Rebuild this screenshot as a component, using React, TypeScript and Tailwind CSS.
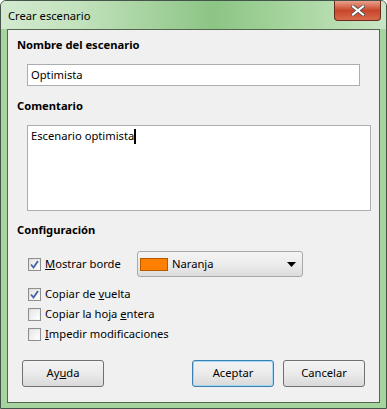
import React from 'react';

const font = { fontFamily: '"Noto Sans", "Open Sans", Arial, sans-serif' };

const Check: React.FC<{ checked?: boolean }> = ({ checked }) => (
  <div className="w-[13px] h-[13px] border border-[#8e8f8f] bg-gradient-to-br from-[#dcdcdc] to-[#fbfbfb] p-[1px] shrink-0">
    <div className="w-full h-full bg-gradient-to-br from-[#e6e6e6] to-[#ffffff] flex items-center justify-center">
      {checked && (
        <svg width="9" height="9" viewBox="0 0 9 9">
          <path d="M1 4.5 L3.5 7.5 L8 1" fill="none" stroke="#4561a8" strokeWidth="1.8" />
        </svg>
      )}
    </div>
  </div>
);

const CheckRow: React.FC<{ checked?: boolean; children: React.ReactNode }> = ({ checked, children }) => (
  <div className="flex items-center h-[20px] pl-[20px]">
    <Check checked={checked} />
    <span className="ml-[4px] text-[11.2px] text-black">{children}</span>
  </div>
);

const Button: React.FC<{ children: React.ReactNode; def?: boolean; className?: string }> = ({ children, def, className }) => (
  <div
    className={
      'h-[27px] rounded-[3px] border flex items-center justify-center text-[11.2px] text-black bg-gradient-to-b from-[#f3f3f3] via-[#ebebeb] to-[#d9d9d9] ' +
      (def ? 'border-[#3c7fb1] shadow-[inset_0_0_0_1px_#9fd9f5] ' : 'border-[#707070] ') +
      (className ?? '')
    }
  >
    {children}
  </div>
);

const App: React.FC = () => {
  return (
    <div className="w-[387px] h-[409px] bg-white" style={font}>
      <div className="w-[387px] h-[409px] rounded-t-[6px] border border-[#44544a] bg-[#a6d49e] flex flex-col">
        <div className="h-[28px] flex items-start bg-[linear-gradient(90deg,#d3ead0_0%,#c2e2bd_20%,#8cc584_55%,#a6d59e_75%,#c9e6c4_100%)] rounded-t-[5px]">
          <span className="ml-[7px] mt-[7px] text-[11.2px] text-black">Crear escenario</span>
          <div className="ml-auto mr-[5px] w-[47px] h-[20px] rounded-b-[4px] border border-t-0 border-[#6b2a1e] bg-gradient-to-b from-[#e8a08a] via-[#c7452a] to-[#d86a4a] flex items-center justify-center">
            <svg width="14" height="11" viewBox="0 0 14 11">
              <path d="M2 1.5 L12 9.5 M12 1.5 L2 9.5" stroke="#4a4a4a" strokeWidth="3.6" strokeLinecap="square" />
              <path d="M2 1.5 L12 9.5 M12 1.5 L2 9.5" stroke="#ffffff" strokeWidth="2.2" strokeLinecap="square" />
            </svg>
          </div>
        </div>
        <div className="mx-[6px] h-[374px] border border-[#55664f] bg-[#f0f0f0] flex flex-col">
          <div className="mt-[7px] ml-[9px] h-[16px] leading-[16px] text-[11.2px] font-bold text-black">Nombre del escenario</div>
          <div className="mt-[11px] ml-[19px] w-[333px] h-[22px] border border-[#abadb3] bg-white flex items-center pl-[3px] text-[11.2px] text-black">
            Optimista
          </div>
          <div className="mt-[12px] ml-[9px] h-[16px] leading-[16px] text-[11.2px] font-bold text-black">Comentario</div>
          <div className="mt-[11px] ml-[19px] w-[344px] h-[86px] border border-[#abadb3] bg-white pl-[3px] pt-[2px] text-[11.2px] leading-[16px] text-black flex items-start">
            <span>Escenario optimista</span>
            <span className="inline-block w-[2px] h-[15px] bg-black mt-[1px]" />
          </div>
          <div className="mt-[11px] ml-[9px] h-[16px] leading-[16px] text-[11.2px] font-bold text-black">Configuración</div>
          <div className="mt-[13px] h-[26px] flex items-center pl-[20px]">
            <Check checked />
            <span className="ml-[4px] text-[11.2px] text-black w-[92px]">
              <u>M</u>ostrar borde
            </span>
            <div className="w-[166px] h-[26px] rounded-[3px] border border-[#a8a8a8] bg-gradient-to-b from-[#f4f4f4] via-[#ececec] to-[#dcdcdc] flex items-center pl-[2px] pr-[6px]">
              <div className="w-[28px] h-[13px] bg-[#ff8000] border border-[#b35a00]" />
              <span className="ml-[4px] text-[11.2px] text-black">Naranja</span>
              <svg className="ml-auto" width="9" height="5" viewBox="0 0 9 5">
                <path d="M0 0 H9 L4.5 5 Z" fill="#000" />
              </svg>
            </div>
          </div>
          <div className="mt-[7px]">
            <CheckRow checked>
              Copiar de <u>v</u>uelta
            </CheckRow>
            <CheckRow>
              Copiar la hoja <u>e</u>ntera
            </CheckRow>
            <CheckRow>
              <u>I</u>mpedir modificaciones
            </CheckRow>
          </div>
          <div className="mt-[16px] flex pl-[14px]">
            <Button className="w-[82px]">
              <span>
                Ay<u>u</u>da
              </span>
            </Button>
            <Button def className="w-[82px] ml-[88px]">
              Aceptar
            </Button>
            <Button className="w-[82px] ml-[9px]">Cancelar</Button>
          </div>
        </div>
      </div>
    </div>
  );
};

export default App;
